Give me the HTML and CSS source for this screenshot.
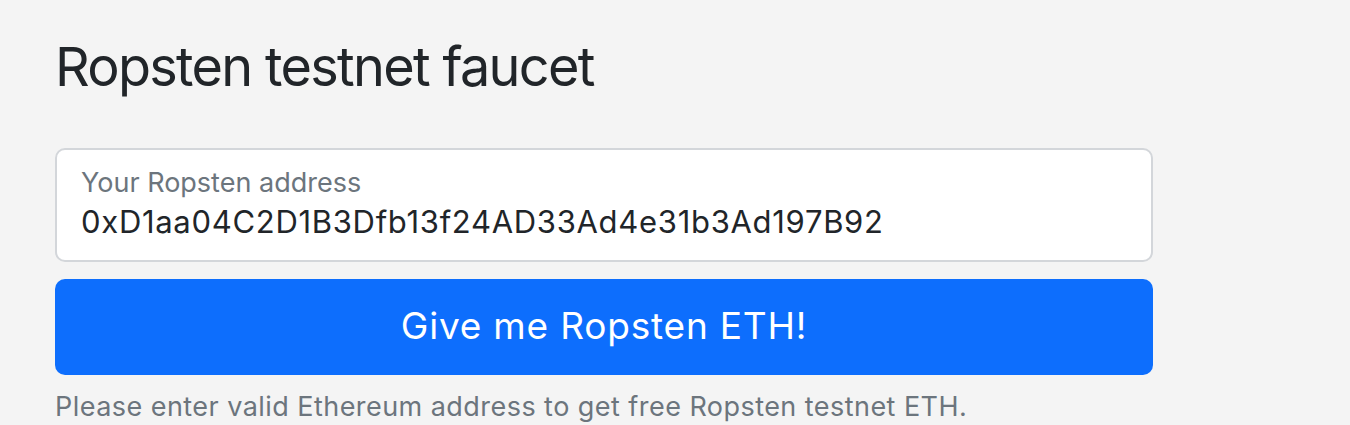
FILE: index.html
```html
<!DOCTYPE html>
<html>
<head>
<meta charset="utf-8">
<link rel="stylesheet" href="styles.css">
</head>
<body>
<main class="container">
  <h1 class="title">Ropsten testnet faucet</h1>
  <form class="form">
    <div class="field">
      <label class="field-label" for="addr">Your Ropsten address</label>
      <input class="field-input" id="addr" type="text" value="0xD1aa04C2D1B3Dfb13f24AD33Ad4e31b3Ad197B92">
    </div>
    <button class="btn" type="button">Give me Ropsten ETH!</button>
    <p class="help">Please enter valid Ethereum address to get free Ropsten testnet ETH.</p>
  </form>
</main>
</body>
</html>
```

FILE: styles.css
```css
html, body {
  margin: 0;
  padding: 0;
  background: #f4f4f4;
  font-family: Inter, "Noto Sans", sans-serif;
}
.container {
  width: 1098px;
  padding: 34px 0 0 55px;
}
.title {
  margin: 0;
  font-size: 54px;
  font-weight: 400;
  line-height: 65px;
  letter-spacing: -1.7px;
  color: #212529;
}
.form {
  margin-top: 49px;
  display: flex;
  flex-direction: column;
}
.field {
  box-sizing: border-box;
  height: 114px;
  background: #fff;
  border: 2px solid #d3d6da;
  border-radius: 10px;
  padding: 16px 24px 0 24px;
  display: flex;
  flex-direction: column;
}
.field-label {
  font-size: 27px;
  line-height: 34px;
  color: #6c757d;
}
.field-input {
  border: 0;
  outline: none;
  padding: 0;
  margin-top: 3px;
  font-family: inherit;
  font-size: 31px;
  line-height: 38px;
  letter-spacing: 0.7px;
  color: #212529;
  background: transparent;
}
.btn {
  margin-top: 17px;
  height: 96px;
  border: 0;
  border-radius: 10px;
  padding: 0 0 4px;
  background: #0d6efd;
  color: #fff;
  font-family: inherit;
  font-size: 37px;
  letter-spacing: 0.8px;
}
.help {
  margin: 16px 0 0;
  font-size: 27px;
  line-height: 32px;
  letter-spacing: 0.45px;
  color: #6c757d;
}
```
